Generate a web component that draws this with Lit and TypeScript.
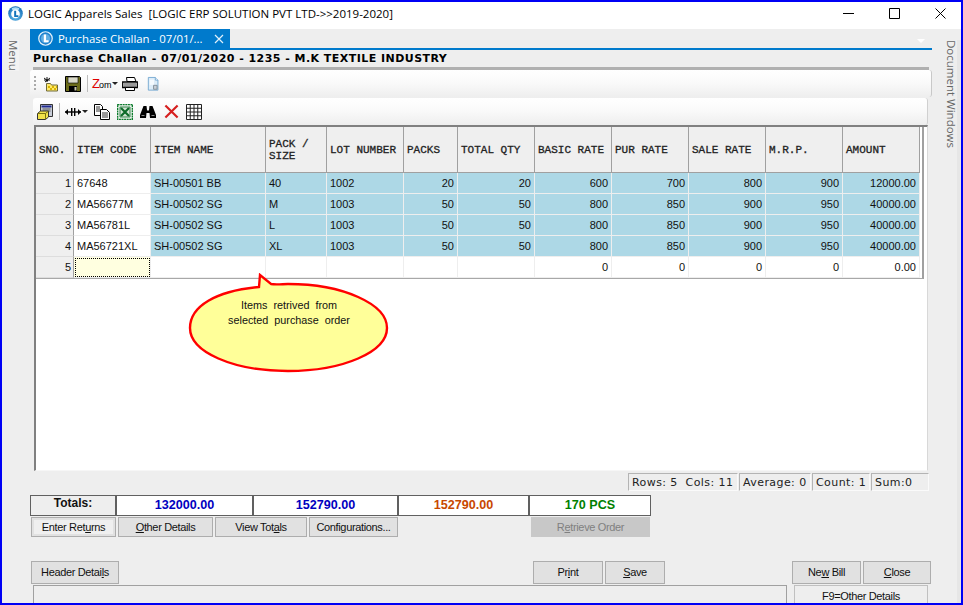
import { html, css, svg, LitElement } from 'lit'
import { customElement } from 'lit/decorators.js'

// title bar logo is a solid sphere, the tab one has a white ring round it
const logo = () => html`
  <svg class="ico" width="15" height="15" viewBox="0 0 16 16">
    <defs>
      <radialGradient id="lg" cx="50%" cy="70%" r="70%">
        <stop offset="0" stop-color="#6fc3ee" />
        <stop offset="1" stop-color="#0c67b4" />
      </radialGradient>
    </defs>
    <circle cx="8" cy="8" r="7.8" fill="url(#lg)" />
    <ellipse cx="8" cy="2.8" rx="4" ry="1.6" fill="#a9dcf6" />
    <circle cx="8" cy="8.4" r="4.6" fill="#fff" />
    <path d="M6.6 5h2.1v4.8h2.4v1.9H6.6z" fill="#1273bb" />
  </svg>
`

const tabLogo = () => html`
  <svg class="ico" width="15" height="15" viewBox="0 0 16 16">
    <circle cx="8" cy="8" r="7.2" fill="#1f83cf" stroke="#e6f3fb" stroke-width="1.3" />
    <circle cx="8" cy="8" r="4.9" fill="#8ccbef" opacity=".6" />
    <path d="M6.2 3.8h2.4v6h2.7v2.2H6.2z" fill="#fff" />
  </svg>
`

const icons = {
  newFile: svg`
    <path d="M3.5 7.5h4l1 1.5h6v6h-11z" fill="#ffe96a" stroke="#6f6a3a" />
    <path d="M5 10h2v2H5zM9 10h2v2H9zM13 10h1v2h-1zM7 12h2v2H7zM11 12h2v2h-2z" fill="#d8b400" />
    <path d="M1 2l4 3M4 1v5M7 2L2 6M1 4h6" stroke="#000" stroke-width=".9" fill="none" />`,
  save: svg`
    <path d="M.5.5h14l1 1v14H.5z" fill="#6b6b1a" stroke="#000" />
    <path d="M3 1h10v6H3z" fill="#d9d9c8" stroke="#000" stroke-width=".6" />
    <path d="M4 10h8v5.5H4z" fill="#000" />
    <path d="M9.5 11h2v3.5h-2z" fill="#c8c8a8" />`,
  printer: svg`
    <path d="M4.5 1.5h8l1.5 4h-9z" fill="#fff" stroke="#000" />
    <path d="M.7 6h14.6v5.5H.7z" fill="#fff" stroke="#000" stroke-width="1.3" />
    <path d="M2 8h12M2 10h12" stroke="#000" stroke-width=".8" />
    <path d="M3.5 11.5h9v3h-9z" fill="#fff" stroke="#000" />`,
  page: svg`
    <path d="M1.5.5h8l3 3v11.5h-11z" fill="#dcecf8" stroke="#6fa5cf" />
    <path d="M9.5.5v3h3" fill="#fff" stroke="#6fa5cf" />
    <path d="M3 3h5v6H3z" fill="#f4fafe" />
    <path d="M7.5 9.5h4v4.5h-4z" fill="#c8cfd6" stroke="#7d8a95" />`,
  form: svg`
    <path d="M3.5.5h12v12h-12z" fill="#c8cdd8" stroke="#333" />
    <path d="M4.5 1.5h10v2h-10z" fill="#202a90" />
    <path d="M5.5 5h8M5.5 7h8" stroke="#555" />
    <path d="M.5 9.5l3-2.5h8v6l-3 2.5h-8z" fill="#f2e24a" stroke="#333" />
    <path d="M.5 9.5h8v6M8.5 9.5l3-2.5" fill="none" stroke="#7a7210" />`,
  arrows: svg`
    <path d="M0 8h16" stroke="#000" stroke-width="1.4" />
    <path d="M0 8l3-3v6zM16 8l-3-3v6zM6 4h1.4v8H6zM9 4h1.4v8H9z" fill="#000" />`,
  copy: svg`
    <path d="M.5.5h6l2 2v9h-8z" fill="#fff" stroke="#000" />
    <path d="M2 3h4M2 5h4M2 7h4" stroke="#000" stroke-width=".8" />
    <path d="M6.5 5.5h6l3 3v7h-9z" fill="#fff" stroke="#000" />
    <path d="M8 9h6M8 11h6M8 13h6" stroke="#000" stroke-width=".8" />`,
  excel: svg`
    <path d="M.5.5h15v15H.5z" fill="#e8f2ea" stroke="#0c7a2c" stroke-width="1.6" stroke-dasharray="2 .6" />
    <path d="M3 3h10v10H3z" fill="#d4e6d6" stroke="#0c6a28" stroke-width=".8" />
    <path d="M4 4l8 8M12 4l-8 8" stroke="#0c6a28" stroke-width="2.2" />`,
  binoculars: svg`
    <path d="M3.5 2h3l.5 4h2l.5-4h3l3.5 9v3H10l-.5-5h-3L6 14H0v-3z" fill="#000" />
    <path d="M1.5 11.5h3M11.5 11.5h3" stroke="#8a8a8a" />
    <path d="M7 6.5h2" stroke="#777" />`,
  cross: svg`
    <path d="M1.5 1.5l13 13M14.5 1.5l-13 13" stroke="#d61f1f" stroke-width="2.3" />`,
  table: svg`
    <path d="M.5.5h15v15H.5zM.5 4.25h15M.5 8h15M.5 11.75h15M4.25.5v15M8 .5v15M11.75.5v15"
      fill="#fff" stroke="#222" />`,
}

const icon = (body: unknown, w = 16, h = 16) =>
  html`<svg class="ico" width=${w} height=${h} viewBox="0 0 16 16">${body}</svg>`

const caret = html`<svg class="caret" width="6" height="3" viewBox="0 0 6 3"><path d="M0 0h6L3 3z" fill="#222" /></svg>`

const columns = [
  'ITEM CODE',
  'ITEM NAME',
  'PACK /\nSIZE',
  'LOT NUMBER',
  'PACKS',
  'TOTAL QTY',
  'BASIC RATE',
  'PUR RATE',
  'SALE RATE',
  'M.R.P.',
  'AMOUNT',
]

const rows = [
  ['67648', 'SH-00501 BB', '40', '1002', '20', '20', '600', '700', '800', '900', '12000.00'],
  ['MA56677M', 'SH-00502 SG', 'M', '1003', '50', '50', '800', '850', '900', '950', '40000.00'],
  ['MA56781L', 'SH-00502 SG', 'L', '1003', '50', '50', '800', '850', '900', '950', '40000.00'],
  ['MA56721XL', 'SH-00502 SG', 'XL', '1003', '50', '50', '800', '850', '900', '950', '40000.00'],
]

const emptyRow = ['', '', '', '', '', '', '0', '0', '0', '0', '0.00']

@customElement('app-root')
export class AppRoot extends LitElement {
  static styles = css`
    :host {
      display: block;
      width: 963px;
      height: 605px;
      box-sizing: border-box;
      border: 2px solid #0000f5;
      background: #eeeeee;
      font-family: 'Liberation Sans', sans-serif;
      font-size: 11px;
      color: #111;
      overflow: hidden;
    }

    .ico { display: block; flex: none; }
    .caret { display: block; margin-left: 1px; flex: none; }

    .titlebar {
      height: 27px;
      box-sizing: border-box;
      padding: 0 0 4px 6px;
      background: #fff;
      display: flex;
      align-items: center;
      font-family: 'Open Sans', sans-serif;
      font-size: 11.5px;
      white-space: pre;
      color: #000;
    }
    .titlebar .name { margin-left: 5px; flex: 1; }
    .winbtns { display: flex; margin-right: -2px; }
    .winbtn { width: 46px; height: 23px; display: flex; align-items: center; justify-content: center; }

    .body { display: flex; height: 574px; }
    .rail-left { width: 28px; padding-top: 11px; box-sizing: border-box; }
    .rail-right { width: 29px; padding-top: 11px; box-sizing: border-box; display: flex; }
    .vtext {
      writing-mode: vertical-rl;
      font-family: 'Open Sans', sans-serif;
      font-size: 11.5px;
      line-height: 11px;
      color: #666;
    }
    .rail-left .vtext { margin-left: 6px; height: 31px; width: 11px; background: #f2f2f2; }
    .rail-right .vtext { margin-left: 9px; width: 16px; }
    .scrollstrip { width: 4px; margin-left: 0; background: #e6e6e6; }

    .main { flex: 1; display: flex; flex-direction: column; min-width: 0; }

    .tabstrip {
      height: 21px;
      box-sizing: border-box;
      border-bottom: 2px solid #007acc;
      display: flex;
      justify-content: space-between;
      flex: none;
    }
    .tab {
      width: 200px;
      height: 19px;
      background: #007acc;
      color: #fff;
      display: flex;
      align-items: center;
      padding: 0 6px 0 8px;
      box-sizing: border-box;
      font-family: 'Open Sans', sans-serif;
      font-size: 11.4px;
    }
    .tab .label { margin-left: 5px; flex: 1; white-space: nowrap; }
    .strip-caret { margin: 10px 7px 0 0; }

    .heading {
      height: 17px;
      flex: none;
      padding-left: 3px;
      font-family: 'DejaVu Sans', sans-serif;
      font-weight: bold;
      font-size: 11px;
      letter-spacing: 0.46px;
      line-height: 17px;
      color: #000;
      white-space: nowrap;
    }
    .rule { height: 3px; margin: 0 3px; background: #b0b0b0; flex: none; }

    .toolbar {
      flex: none;
      display: flex;
      align-items: center;
      background: linear-gradient(#ffffff, #fafafa 45%, #eeeeee);
      border-radius: 3px;
      box-sizing: border-box;
    }
    .tb1 { height: 27px; padding-left: 4px; border-right: 1px solid #c8c8c8; }
    .tb2 { height: 27px; margin: 1px 4px 0 3px; padding-left: 4px; border-right: 1px solid #d0d0d0; }
    .grip { width: 2px; height: 15px; margin-right: 7px; background: repeating-linear-gradient(#aaa 0 2px, transparent 2px 4px); }
    .tsep { width: 1px; height: 17px; background: #bcbcbc; }
    .zoom { display: flex; align-items: center; width: 25px; }
    .zoom-text { font-family: 'Liberation Sans', sans-serif; font-size: 9px; white-space: nowrap; color: #000; }
    .zoom-text b { color: #e00000; font-size: 13px; font-weight: normal; margin-right: -1px; }

    .grid-wrap {
      flex: 1;
      margin: 0 4px 0 4px;
      border-style: solid;
      border-width: 2px 1px 1px 2px;
      border-color: #808080 #d8d8d8 #f6f6f6 #808080;
      background: #fff;
      position: relative;
      min-height: 0;
    }
    .grid {
      display: grid;
      grid-template-columns: 38px 77px 115px 61px 77px 54px 77px 77px 77px 77px 77px 77px;
      grid-template-rows: 46px repeat(5, 21px);
      width: 886px;
      border-right: 2px solid #a0a0a0;
      border-bottom: 1px solid #a8a8a8;
    }
    .hd {
      background: #efefef;
      border-right: 1px solid #a0a0a0;
      border-bottom: 1px solid #a0a0a0;
      box-sizing: border-box;
      display: flex;
      align-items: center;
      padding: 2px 0 0 3px;
      font-family: 'Liberation Mono', monospace;
      font-size: 11px;
      -webkit-text-stroke: 0.3px #222;
      line-height: 11.5px;
      white-space: pre;
      color: #222;
    }
    .cell {
      box-sizing: border-box;
      border-right: 1px solid #eeeeee;
      border-bottom: 1px solid #eeeeee;
      padding: 0 3px;
      line-height: 21px;
      white-space: nowrap;
      background: #fff;
      font-size: 11px;
    }
    .cell.fill { background: #add8e6; }
    .cell.num { text-align: right; }
    .cell.sno { background: #efefef; text-align: right; border-right-color: #a0a0a0; border-bottom-color: #dddddd; padding-right: 2px; }
    .cell.current { background: #ffffe0; outline: 1px dotted #000; outline-offset: -2px; }

    .bubble { position: absolute; left: 152px; top: 146px; width: 202px; height: 100px; }
    .bubble svg { display: block; }
    .bubble-text {
      position: absolute;
      left: 0;
      right: 0;
      top: 25px;
      text-align: center;
      font-size: 10.8px;
      line-height: 15px;
      white-space: pre;
      color: #111;
    }

    .statusbar {
      height: 18px;
      margin: 2px 3px 0 0;
      flex: none;
      display: flex;
      justify-content: flex-end;
      gap: 1px;
      font-family: 'DejaVu Sans', sans-serif;
      font-size: 11px;
      letter-spacing: 0.42px;
      line-height: 17px;
      color: #222;
    }
    .statusbar span {
      box-sizing: border-box;
      border: 1px solid #b4b4b4;
      border-right-color: #fafafa;
      border-bottom-color: #fafafa;
      padding-left: 3px;
      white-space: pre;
    }

    .totals { display: flex; height: 21px; margin-top: 4px; flex: none; width: 621px; border: 1px solid #606060; box-sizing: border-box; }
    .totals div {
      box-sizing: border-box;
      background: #fff;
      border-right: 2px solid #606060;
      font-weight: bold;
      font-size: 12.6px;
      text-align: center;
      line-height: 19px;
    }
    .totals div:last-child { border-right: 0; flex: 1; }
    .totals .t-label { width: 86px; background: #eeeeee; line-height: 15px; color: #111; font-size: 12px; }
    .totals .blue { color: #0000c0; }
    .totals .orange { color: #c84800; }
    .totals .green { color: #008000; }

    .btn {
      box-sizing: border-box;
      flex: none;
      background: #e1e1e1;
      border: 1px solid #adadad;
      text-align: center;
      font-size: 11px;
      letter-spacing: -0.35px;
      color: #111;
      white-space: nowrap;
    }
    .btn.default { background: #efefef; box-shadow: inset 0 0 0 2px #e1e1e1; }
    .btn.off { background: #c8c8c8; border-color: #c8c8c8; color: #808080; }
    .row { display: flex; flex: none; }
    .row1 { height: 20px; margin: 1px 0 0 1px; gap: 2px; }
    .row1 .btn { line-height: 18px; }
    .row2 { height: 23px; margin: 24px 0 0 1px; gap: 2px; }
    .row2 .btn { line-height: 21px; }
    .last { flex: none; display: flex; margin-top: 1px; height: 18px; }
    .memo { width: 754px; margin-left: 3px; border: 1px solid #a0a0a0; border-bottom: 0; box-sizing: border-box; }
    .f9 {
      width: 134px;
      margin-left: 7px;
      border: 1px solid #c0c0c0;
      border-bottom: 0;
      box-sizing: border-box;
      text-align: center;
      line-height: 21px;
      letter-spacing: -0.35px;
    }
  `

  render() {
    return html`
      <div class="titlebar">
        ${logo()}
        <span class="name">LOGIC Apparels Sales  [LOGIC ERP SOLUTION PVT LTD-&gt;&gt;2019-2020]</span>
        <div class="winbtns">
          <div class="winbtn"><svg width="11" height="11" viewBox="0 0 11 11"><path d="M0 5.5h11" stroke="#000" /></svg></div>
          <div class="winbtn"><svg width="11" height="11" viewBox="0 0 11 11"><path d="M.5.5h10v10H.5z" fill="none" stroke="#000" /></svg></div>
          <div class="winbtn"><svg width="11" height="11" viewBox="0 0 11 11"><path d="M.5.5l10 10M10.5.5l-10 10" stroke="#000" /></svg></div>
        </div>
      </div>
      <div class="body">
        <div class="rail-left"><div class="vtext">Menu</div></div>
        <div class="main">
          <div class="tabstrip">
            <div class="tab">
              ${tabLogo()}
              <span class="label">Purchase Challan - 07/01/...</span>
              <svg class="ico" width="10" height="10" viewBox="0 0 10 10"><path d="M1 1l8 8M9 1l-8 8" stroke="#dff0fa" stroke-width="1.2" /></svg>
            </div>
            <svg class="strip-caret" width="8" height="4" viewBox="0 0 8 4"><path d="M0 0h8L4 4z" fill="#fff" /></svg>
          </div>
          <div class="heading">Purchase Challan - 07/01/2020 - 1235 - M.K TEXTILE INDUSTRY</div>
          <div class="rule"></div>
          ${this.renderToolbars()}
          ${this.renderGrid()}
          <div class="statusbar">
            <span style="width:110px">Rows: 5  Cols: 11</span>
            <span style="width:72px">Average: 0</span>
            <span style="width:58px">Count: 1</span>
            <span style="width:58px">Sum:0</span>
          </div>
          ${this.renderBottom()}
        </div>
        <div class="rail-right">
          <div class="vtext">Document Windows</div>
          <div class="scrollstrip"></div>
        </div>
      </div>
    `
  }

  renderToolbars() {
    const gap = (w: number) => html`<span style="width:${w}px;flex:none"></span>`
    return html`
      <div class="toolbar tb1">
        <span class="grip"></span>
        ${icon(icons.newFile)}${gap(6)}${icon(icons.save)}${gap(6)}
        <span class="tsep"></span>${gap(4)}
        <span class="zoom"><span class="zoom-text"><b>Z</b>om</span>${caret}</span>${gap(5)}
        ${icon(icons.printer)}${gap(9)}${icon(icons.page, 14, 16)}
      </div>
      <div class="toolbar tb2">
        ${icon(icons.form)}${gap(6)}<span class="tsep"></span>${gap(5)}
        ${icon(icons.arrows)}${caret}${gap(6)}${icon(icons.copy)}${gap(7)}${icon(icons.excel)}${gap(7)}
        ${icon(icons.binoculars)}${gap(8)}${icon(icons.cross, 15, 15)}${gap(7)}${icon(icons.table)}
      </div>
    `
  }

  renderGrid() {
    return html`
      <div class="grid-wrap">
        <div class="grid">
          <div class="hd">SNO.</div>
          ${columns.map((c) => html`<div class="hd">${c}</div>`)}
          ${rows.map(
            (r, i) => html`
              <div class="cell sno">${i + 1}</div>
              ${r.map((v, j) => {
                const fill = j > 0 ? 'fill' : ''
                const num = j > 3 ? 'num' : ''
                return html`<div class="cell ${fill} ${num}">${v}</div>`
              })}
            `,
          )}
          <div class="cell sno">5</div>
          ${emptyRow.map((v, j) => html`<div class="cell ${j > 3 ? 'num' : ''} ${j === 0 ? 'current' : ''}">${v}</div>`)}
        </div>
        <div class="bubble">
          <svg width="202" height="100" viewBox="0 0 202 100">
            <path
              d="M72 2 L71 14 C28 18 2 33 2 55 C2 79 45 98 100 98 C155 98 199 79 199 55 C199 31 155 11 100 11 C95 11 88 12 83 11 Z"
              fill="#ffff99"
              stroke="#ff0000"
              stroke-width="2.4"
            />
          </svg>
          <div class="bubble-text">Items  retrived  from
selected  purchase  order</div>
        </div>
      </div>
    `
  }

  renderBottom() {
    return html`
      <div class="totals">
        <div class="t-label">Totals:</div>
        <div class="blue" style="width:137px">132000.00</div>
        <div class="blue" style="width:145px">152790.00</div>
        <div class="orange" style="width:131px">152790.00</div>
        <div class="green">170 PCS</div>
      </div>
      <div class="row row1">
        <div class="btn default" style="width:85px">Enter Ret<u>u</u>rns</div>
        <div class="btn" style="width:95px"><u>O</u>ther Details</div>
        <div class="btn" style="width:92px">View Tot<u>a</u>ls</div>
        <div class="btn" style="width:89px">Confi<u>g</u>urations...</div>
        <div class="btn off" style="width:119px;margin-left:131px">R<u>e</u>trieve Order</div>
      </div>
      <div class="row row2">
        <div class="btn" style="width:88px">Header Detai<u>l</u>s</div>
        <div class="btn" style="width:70px;margin-left:412px">Pr<u>i</u>nt</div>
        <div class="btn" style="width:60px"><u>S</u>ave</div>
        <div class="btn" style="width:69px;margin-left:125px">Ne<u>w</u> Bill</div>
        <div class="btn" style="width:68px"><u>C</u>lose</div>
      </div>
      <div class="last">
        <div class="memo"></div>
        <div class="f9">F9=Other Details</div>
      </div>
    `
  }
}

declare global {
  interface HTMLElementTagNameMap {
    'app-root': AppRoot
  }
}
